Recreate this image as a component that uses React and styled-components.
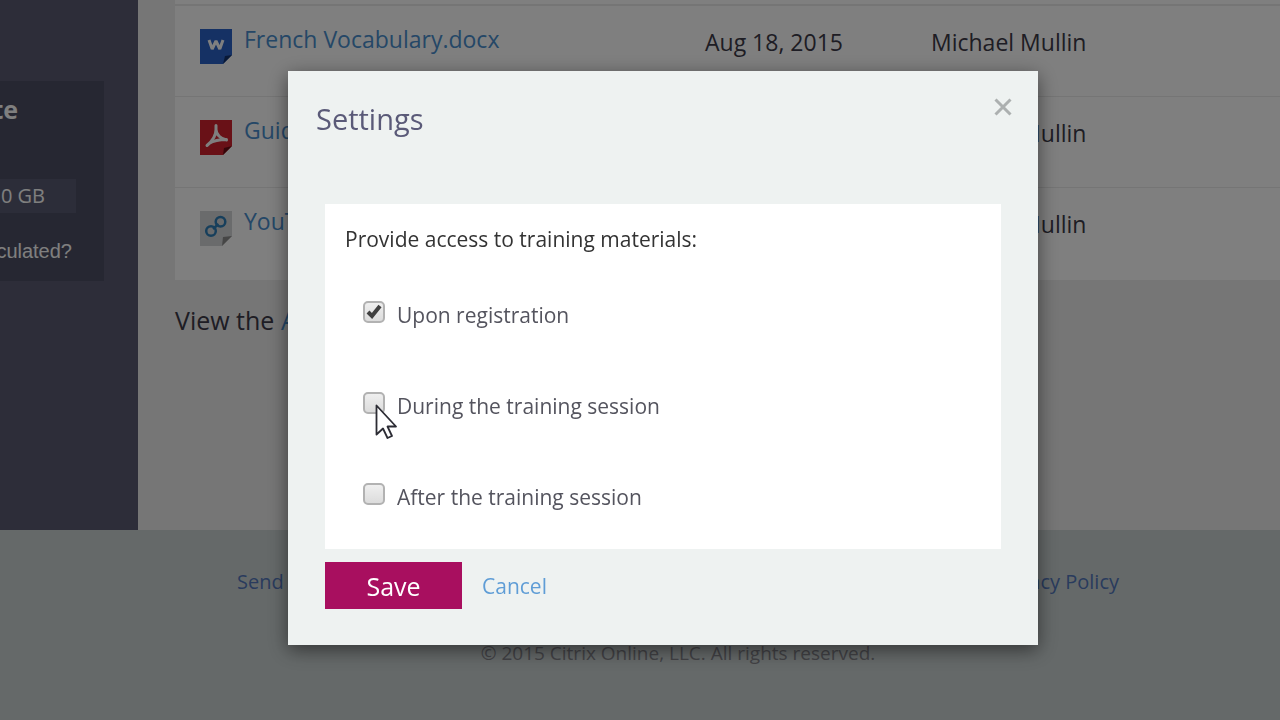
import React from "react"
import styled, { createGlobalStyle } from 'styled-components';

const GlobalStyle = createGlobalStyle`
  * {
    box-sizing: border-box;
  }
  body {
    margin: 0;
    font-family: "Open Sans", "Noto Sans", sans-serif;
    font-size: 21px;
    line-height: 28px;
    color: #3c3a48;
  }
`;

const Page = styled.div`
  min-height: 100vh;
  display: flex;
  flex-direction: column;
  background: #ececec;
  overflow: hidden;
`;

const Main = styled.div`
  display: flex;
`;

const Sidebar = styled.aside`
  flex: 0 0 138px;
  padding-top: 81px;
  background: #5a5a72;
`;

const StorageCard = styled.section`
  width: 104px;
  height: 200px;
  padding-top: 14px;
  background: #4c4e64;
  color: #ffffff;
  white-space: nowrap;
`;

const StorageTitle = styled.h2`
  margin: 0 0 56px;
  width: 18px;
  display: flex;
  justify-content: flex-end;
  font-size: 25px;
  line-height: 28px;
`;

const StorageBar = styled.div`
  width: 76px;
  height: 34px;
  padding-right: 31px;
  display: flex;
  align-items: center;
  justify-content: flex-end;
  background: #595b72;
  font-size: 20px;
`;

const StorageHelp = styled.a`
  width: 72px;
  margin-top: 24px;
  display: flex;
  justify-content: flex-end;
  font-family: "Liberation Sans", Arial, sans-serif;
  font-size: 20px;
  color: #ffffff;
  text-decoration: none;
`;

const Content = styled.main`
  flex: 1;
  padding: 0 0 196px 37px;
`;

const Panel = styled.div`
  padding: 4px 0 2px;
  background: #ffffff;
`;

const Materials = styled.table`
  width: 100%;
  table-layout: fixed;
  border-spacing: 0;
  border-top: 1px solid #eaeaea;
  font-size: 23px;
`;

const Cell = styled.td`
  width: ${(props) => props.$width || 'auto'};
  height: 91px;
  padding: 22px 0 0;
  vertical-align: top;
  border-top: 1px solid #eaeaea;
`;

const FileCell = styled(Cell)`
  padding: 23px 0 0 25px;
`;

const FileInfo = styled.div`
  display: flex;
  gap: 12px;
`;

const FileLink = styled.a`
  color: #4a8fce;
  text-decoration: none;
`;

const FileName = styled(FileLink)`
  margin-top: -4px;
`;

const ViewText = styled.p`
  margin: 26px 0 0;
  font-size: 25px;
`;

const Footer = styled.footer`
  flex: 1;
  padding: 38px 0 0 76px;
  background: #cbd3d3;
  font-size: 19px;
  text-align: center;
`;

const FooterLinks = styled.nav`
  max-width: 882px;
  margin: 0 auto 43px;
  display: flex;
  justify-content: space-between;
  font-size: 20px;
`;

const FooterLink = styled.a`
  color: #5377ba;
  text-decoration: none;
`;

const Copyright = styled.p`
  margin: 0;
  color: #85858c;
`;

const Overlay = styled.div`
  position: fixed;
  inset: 0;
  padding: 71px 0 0 46px;
  display: flex;
  align-items: flex-start;
  justify-content: center;
  background: rgba(0, 0, 0, 0.5);
`;

const Dialog = styled.div`
  width: 750px;
  padding: 0 37px 36px;
  background: #eef2f1;
  box-shadow: 0 5px 18px rgba(0, 0, 0, 0.5);
`;

const DialogHeader = styled.div`
  height: 133px;
  margin: 0 -11px 0 -9px;
  padding-top: 25px;
  display: flex;
  align-items: flex-start;
  justify-content: space-between;
`;

const Title = styled.h1`
  margin: 0;
  font-size: 29px;
  line-height: 46px;
  font-weight: 400;
  color: #5a5a78;
`;

const CloseButton = styled.button`
  width: 18px;
  height: 24px;
  padding: 0;
  border: none;
  background: none;
  color: #acb0b0;
  cursor: pointer;
`;

const Options = styled.fieldset`
  margin: 0 0 13px;
  padding: 21px 20px 38px;
  border: none;
  background: #ffffff;
`;

const Legend = styled.legend`
  float: left;
  width: 100%;
  padding: 0;
  margin-bottom: 48px;
  color: #333333;
`;

const OptionList = styled.div`
  clear: both;
  padding-left: 18px;
  display: flex;
  flex-direction: column;
  gap: 63px;
`;

const Option = styled.label`
  display: flex;
  gap: 12px;
  color: #54545e;
`;

const CheckWrap = styled.span`
  position: relative;
  width: 22px;
  height: 22px;
`;

const Checkbox = styled.input`
  appearance: none;
  display: block;
  width: 22px;
  height: 22px;
  margin: 0;
  border: 2px solid #b2b2b2;
  border-radius: 5px;
  background: linear-gradient(#efefef, #dcdcdc);

  & + svg {
    display: none;
  }
  &:checked + svg {
    display: block;
  }
`;

const CheckMark = styled.svg`
  position: absolute;
  left: 3px;
  top: 2px;
  pointer-events: none;
`;

const Pointer = styled.svg`
  position: absolute;
  left: 12px;
  top: 12px;
  pointer-events: none;
`;

const Actions = styled.div`
  display: flex;
  align-items: center;
  gap: 20px;
`;

const SaveButton = styled.button`
  width: 137px;
  height: 47px;
  padding: 0;
  border: none;
  background: #a80f5f;
  color: #ffffff;
  font-family: inherit;
  font-size: 25px;
  cursor: pointer;
`;

const CancelLink = styled.a`
  color: #5f9dd6;
  text-decoration: none;
`;

const WordIcon = () => (
  <svg width="32" height="35" viewBox="0 0 32 35" aria-hidden="true">
    <path d="M0 0h32v26l-9 9H0z" fill="#2a62c8" />
    <path d="M32 26l-9 9 2-8z" fill="#12336f" />
    <path
      d="M9 11l3.200 9L16 12l3.800 8L23 11"
      fill="none"
      stroke="#fff"
      strokeWidth="3"
      strokeLinejoin="bevel"
    />
  </svg>
);

const PdfIcon = () => (
  <svg width="32" height="35" viewBox="0 0 32 35" aria-hidden="true">
    <path d="M0 0h32v26l-9 9H0z" fill="#d2222e" />
    <path d="M32 26l-9 9 1-7z" fill="#6b0d14" />
    <path
      d="M16 5.500v4c0 5-3 11-9 16M16 9.500c0 5 5 9.500 10.500 10.500M9 23.500c4-2.500 9-4 17.500-4"
      fill="none"
      stroke="#fff"
      strokeWidth="3"
      strokeLinecap="round"
      strokeLinejoin="round"
    />
  </svg>
);

const LinkIcon = () => (
  <svg width="32" height="35" viewBox="0 0 32 35" aria-hidden="true">
    <path d="M0 0h32v25l-10 10H0z" fill="#d4d6d8" />
    <path d="M32 25l-10 10 1-9z" fill="#8c8c8c" />
    <g fill="none" stroke="#2f7fb8" strokeWidth="2.500">
      <circle cx="20.500" cy="10.800" r="4.800" />
      <circle cx="11" cy="20" r="4.800" />
      <path d="M13 18l5.500-5" />
    </g>
  </svg>
);

const files = [
  { name: 'French Vocabulary.docx', icon: WordIcon },
  { name: 'Guide', icon: PdfIcon },
  { name: 'YouTube', icon: LinkIcon },
];

const options = [
  { id: 'registration', text: 'Upon registration' },
  { id: 'during', text: 'During the training session', pointer: true },
  { id: 'after', text: 'After the training session' },
];

export default class App extends React.Component {

  state = {
    open: true,
    checked: { registration: true }
  }

  toggleOption = (id) => {
    const checked = { ...this.state.checked, [id]: !this.state.checked[id] };
    this.setState({ checked });
  };

  closeDialog = () => {
    this.setState({ open: false });
  };

  renderDialog = () => {
    return (
      <Overlay>
        <Dialog role="dialog" aria-labelledby="settings-title">
          <DialogHeader>
            <Title id="settings-title">Settings</Title>
            <CloseButton aria-label="Close" onClick={this.closeDialog}>
              <svg width="18" height="18" viewBox="0 0 18 18">
                <path d="M1.500 1.500l15 15M16.500 1.500l-15 15" stroke="currentColor" strokeWidth="3" />
              </svg>
            </CloseButton>
          </DialogHeader>
          <Options>
            <Legend>Provide access to training materials:</Legend>
            <OptionList>
              {options.map((option) => (
                <Option key={option.id}>
                  <CheckWrap>
                    <Checkbox
                      type="checkbox"
                      checked={!!this.state.checked[option.id]}
                      onChange={() => this.toggleOption(option.id)}
                    />
                    <CheckMark width="16" height="16" viewBox="0 0 16 16">
                      <path d="M2 9l4 4 8-10" fill="none" stroke="#404040" strokeWidth="4" />
                    </CheckMark>
                    {option.pointer && (
                      <Pointer width="24" height="36" viewBox="0 0 24 36">
                        <path
                          d="M1.500 1.500v29l6.500-6 4.500 9.500 4.500-2-4.500-9.500H21z"
                          fill="#fff"
                          stroke="#2c2c34"
                          strokeWidth="1.800"
                          strokeLinejoin="round"
                        />
                      </Pointer>
                    )}
                  </CheckWrap>
                  {option.text}
                </Option>
              ))}
            </OptionList>
          </Options>
          <Actions>
            <SaveButton onClick={this.closeDialog}>Save</SaveButton>
            <CancelLink href="#" onClick={this.closeDialog}>Cancel</CancelLink>
          </Actions>
        </Dialog>
      </Overlay>
    )
  };

  render() {
    return (
      <>
        <GlobalStyle />
        <Page>
          <Main>
            <Sidebar>
              <StorageCard>
                <StorageTitle>te</StorageTitle>
                <StorageBar>.0 GB</StorageBar>
                <StorageHelp href="#">culated?</StorageHelp>
              </StorageCard>
            </Sidebar>
            <Content>
              <Panel>
                <Materials>
                  <tbody>
                    {files.map(({ name, icon: Icon }) => (
                      <tr key={name}>
                        <FileCell $width="530px">
                          <FileInfo>
                            <Icon />
                            <FileName href="#">{name}</FileName>
                          </FileInfo>
                        </FileCell>
                        <Cell $width="226px">Aug 18, 2015</Cell>
                        <Cell>Michael Mullin</Cell>
                      </tr>
                    ))}
                  </tbody>
                </Materials>
              </Panel>
              <ViewText>View the <FileLink href="#">A</FileLink></ViewText>
            </Content>
          </Main>
          <Footer>
            <FooterLinks>
              <FooterLink href="#">Send</FooterLink>
              <FooterLink href="#">Privacy Policy</FooterLink>
            </FooterLinks>
            <Copyright>© 2015 Citrix Online, LLC. All rights reserved.</Copyright>
          </Footer>
        </Page>
        {this.state.open && this.renderDialog()}
      </>
    )
  }
}
